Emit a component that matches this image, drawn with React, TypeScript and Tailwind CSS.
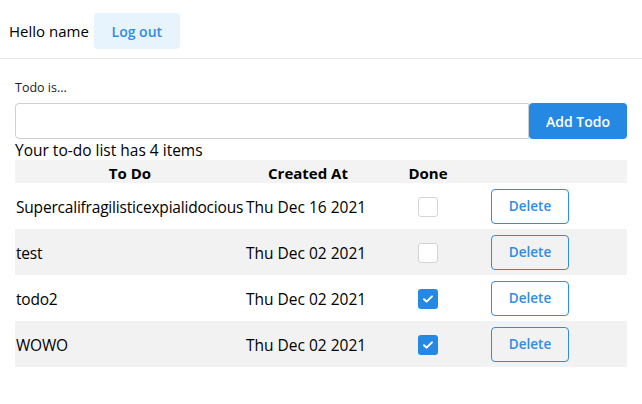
import React, { useState } from 'react';

type Todo = { id: number; text: string; createdAt: string; done: boolean };

const initialTodos: Todo[] = [
    { id: 1, text: 'Supercalifragilisticexpialidocious', createdAt: 'Thu Dec 16 2021', done: false },
    { id: 2, text: 'test', createdAt: 'Thu Dec 02 2021', done: false },
    { id: 3, text: 'todo2', createdAt: 'Thu Dec 02 2021', done: true },
    { id: 4, text: 'WOWO', createdAt: 'Thu Dec 02 2021', done: true },
];

const Check: React.FC<{ checked: boolean; onToggle: () => void }> = ({ checked, onToggle }) => (
    <button
        onClick={onToggle}
        className={
            checked
                ? 'w-[20px] h-[20px] rounded-[3px] bg-[#2589e4] flex items-center justify-center'
                : 'w-[20px] h-[20px] rounded-[3px] bg-white border border-[#d4d4d4]'
        }
    >
        {checked && (
            <svg width="12" height="10" viewBox="0 0 12 10">
                <path d="M2 5.2l2.6 2.4L10 2.4" fill="none" stroke="white" strokeWidth="2" strokeLinecap="round" strokeLinejoin="round" />
            </svg>
        )}
    </button>
);

export default function App() {
    const [todos, setTodos] = useState<Todo[]>(initialTodos);
    const [draft, setDraft] = useState('');

    const toggle = (id: number) =>
        setTodos((prev) => prev.map((t) => (t.id === id ? { ...t, done: !t.done } : t)));
    const remove = (id: number) => setTodos((prev) => prev.filter((t) => t.id !== id));

    return (
        <div className="min-h-screen bg-white text-black font-['Open_Sans','Noto_Sans',sans-serif]">
            {/* header */}
            <div className="flex items-center gap-[5px] h-[59px] pl-[9px] pt-[4px] border-b border-[#e6e6e6]">
                <span className="text-[15px]">Hello name</span>
                <button className="h-[36px] w-[86px] rounded-[4px] bg-[#e8f4fd] text-[#2f8ce4] text-[14px] font-[550]">
                    Log out
                </button>
            </div>

            <div className="px-[15px] pt-[19px]">
                <label className="block text-[12.5px] leading-[20px] text-[#222]">Todo is...</label>
                <div className="flex mt-[5px] w-[612px]">
                    <input
                        value={draft}
                        onChange={(e) => setDraft(e.target.value)}
                        className="flex-1 h-[36px] border border-[#cfcfcf] rounded-l-[4px] outline-none px-2"
                    />
                    <button className="w-[98px] h-[36px] rounded-[4px] bg-[#2589e4] text-white text-[14px] font-[550]">
                        Add Todo
                    </button>
                </div>
                <div className="text-[15.5px] leading-[19px] pt-[2px]">Your to-do list has {todos.length} items</div>

                <div className="w-[612px]">
                    <div className="grid grid-cols-[230px_126px_114px_1fr] h-[23px] pt-[2px] items-center bg-[#f3f3f3] font-bold text-[15px]">
                        <div className="text-center">To Do</div>
                        <div className="text-center">Created At</div>
                        <div className="text-center">Done</div>
                        <div />
                    </div>
                    {todos.map((t, i) => (
                        <div
                            key={t.id}
                            className={
                                i % 2 === 1
                                    ? 'grid grid-cols-[230px_126px_114px_1fr] h-[46px] items-center bg-[#f2f2f2] text-[15.5px]'
                                    : 'grid grid-cols-[230px_126px_114px_1fr] h-[46px] items-center bg-white text-[15.5px]'
                            }
                        >
                            <div className="pl-[1px] pt-[4px] whitespace-nowrap tracking-[-0.2px]">{t.text}</div>
                            <div className="pl-[1px] pt-[4px] whitespace-nowrap">{t.createdAt}</div>
                            <div className="flex justify-center pt-[1px]">
                                <Check checked={t.done} onToggle={() => toggle(t.id)} />
                            </div>
                            <div className="pl-[6px]">
                                <button
                                    onClick={() => remove(t.id)}
                                    className="w-[78px] h-[35px] rounded-[4px] border border-[#2f8ce4] text-[#2f8ce4] text-[13.5px] font-[550]"
                                >
                                    Delete
                                </button>
                            </div>
                        </div>
                    ))}
                </div>
            </div>
        </div>
    );
}
